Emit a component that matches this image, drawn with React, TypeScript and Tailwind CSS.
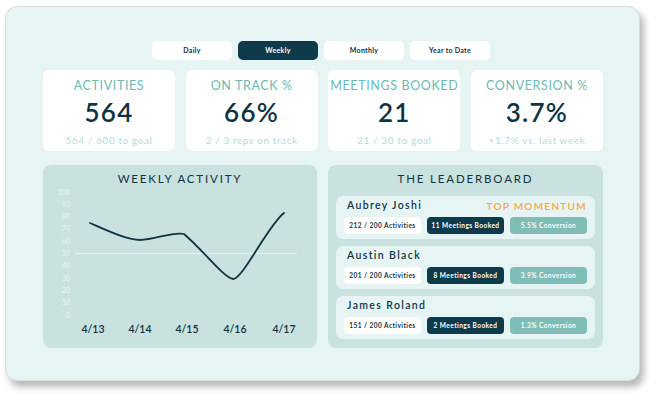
import React from "react";

const tabs = ["Daily", "Weekly", "Monthly", "Year to Date"];

const stats = [
  { title: "ACTIVITIES", value: "564", sub: "564 / 600 to goal" },
  { title: "ON TRACK %", value: "66%", sub: "2 / 3 reps on track" },
  { title: "MEETINGS BOOKED", value: "21", sub: "21 / 30 to goal" },
  { title: "CONVERSION %", value: "3.7%", sub: "+1.7% vs. last week" },
];

const reps = [
  { name: "Aubrey Joshi", activities: "212 / 200 Activities", meetings: "11 Meetings Booked", conversion: "5.5% Conversion", top: true },
  { name: "Austin Black", activities: "201 / 200 Activities", meetings: "8 Meetings Booked", conversion: "3.9% Conversion", top: false },
  { name: "James Roland", activities: "151 / 200 Activities", meetings: "2 Meetings Booked", conversion: "1.3% Conversion", top: false },
];

const FONT = { fontFamily: "Lato, 'Open Sans', sans-serif" };

function ActivityChart() {
  const ticks = [100, 90, 80, 70, 60, 50, 40, 30, 20, 10, 0];
  const y = (v: number) => 129 - v * 1.23;
  const days = [
    { label: "4/13", x: 50 },
    { label: "4/14", x: 97 },
    { label: "4/15", x: 144 },
    { label: "4/16", x: 192 },
    { label: "4/17", x: 241 },
  ];
  return (
    <svg width="274" height="160" viewBox="0 0 274 160" className="block">
      {ticks.map((t) => (
        <text key={t} x="27" y={y(t) + 2.5} textAnchor="end" fontSize="7" fill="#e8f5f4" style={FONT}>
          {t}
        </text>
      ))}
      <line x1="32" x2="254" y1={y(50)} y2={y(50)} stroke="#e6f3f2" strokeWidth="1" />
      <path
        d="M47 37 C 70 47, 85 54, 97 54 C 112 54, 130 45, 141 48 C 160 64, 180 91, 190 93 C 200 93, 225 39, 241 27"
        fill="none"
        stroke="#0f3444"
        strokeWidth="1.8"
        strokeLinecap="round"
        strokeLinejoin="round"
      />
      {days.map((d) => (
        <text key={d.label} x={d.x} y="147" textAnchor="middle" fontSize="10.5" fill="#0f3444" style={FONT} fontWeight="600">
          {d.label}
        </text>
      ))}
    </svg>
  );
}

export default function App() {
  return (
    <div className="h-[401px] w-[659px] overflow-hidden bg-white" style={FONT}>
      <div className="ml-[5px] mt-[6px] h-[375px] w-[635px] rounded-[12px] border border-[#d5dede] bg-[#e6f4f4] shadow-[4px_6px_7px_rgba(0,0,0,0.28)]">
        <div className="ml-[146px] mt-[34px] flex gap-[6px]">
          {tabs.map((t) => (
            <div
              key={t}
              className={
                t === "Weekly"
                  ? "flex h-[19px] w-[80px] items-center justify-center rounded-[5px] bg-[#0f3a4a] text-[7px] font-bold tracking-[0.04em] text-white"
                  : "flex h-[19px] w-[80px] items-center justify-center rounded-[5px] bg-white text-[7px] font-bold tracking-[0.04em] text-[#0f3444]"
              }
            >
              {t}
            </div>
          ))}
        </div>

        <div className="ml-[37px] mt-[10px] flex gap-[10.67px]">
          {stats.map((s) => (
            <div key={s.title} className="flex h-[81px] w-[132px] flex-col items-center rounded-[6px] bg-white">
              <div className="mt-[8px] whitespace-nowrap text-[12.5px] leading-[15px] tracking-[0.05em] text-[#6cb9b2]">{s.title}</div>
              <div className="mt-[4px] text-[26px] font-semibold leading-[30px] tracking-[0.05em] text-[#0f3444]">{s.value}</div>
              <div className="mt-[7px] whitespace-nowrap text-[10px] leading-[13px] tracking-[0.06em] text-[#b6dcd8]">{s.sub}</div>
            </div>
          ))}
        </div>

        <div className="ml-[37px] mt-[14px] flex gap-[11px]">
          <div className="h-[183px] w-[274px] rounded-[8px] bg-[#c9e1df]">
            <div className="mt-[7px] text-center text-[11.5px] leading-[14px] tracking-[0.16em] text-[#0f3444]">
              WEEKLY ACTIVITY
            </div>
            <ActivityChart />
          </div>

          <div className="flex h-[183px] w-[275px] flex-col rounded-[8px] bg-[#c9e1df] px-[8px]">
            <div className="mt-[7px] text-center text-[11.5px] leading-[14px] tracking-[0.16em] text-[#0f3444]">
              THE LEADERBOARD
            </div>
            <div className="mt-[10px] flex flex-col gap-[7px]">
              {reps.map((r) => (
                <div key={r.name} className="h-[43px] rounded-[7px] bg-[#e6f4f4] px-[8px] pt-[3px]">
                  <div className="flex h-[14px] items-center justify-between pl-[3px]">
                    <span className="text-[10.5px] font-semibold tracking-[0.13em] text-[#0f3444]">{r.name}</span>
                    {r.top && (
                      <span className="text-[10px] font-semibold tracking-[0.13em] text-[#f6a93b]">TOP MOMENTUM</span>
                    )}
                  </div>
                  <div className="mt-[4px] flex gap-[6px]">
                    <div className="flex h-[17px] w-[77px] items-center justify-center whitespace-nowrap rounded-[4px] bg-white text-[6.5px] font-bold tracking-[0.07em] text-[#0f3444]">
                      {r.activities}
                    </div>
                    <div className="flex h-[17px] w-[77px] items-center justify-center whitespace-nowrap rounded-[4px] bg-[#0f3a4a] text-[6.5px] font-bold tracking-[0.07em] text-white">
                      {r.meetings}
                    </div>
                    <div className="flex h-[17px] w-[77px] items-center justify-center whitespace-nowrap rounded-[4px] bg-[#7fbdb7] text-[6.5px] font-bold tracking-[0.07em] text-white">
                      {r.conversion}
                    </div>
                  </div>
                </div>
              ))}
            </div>
          </div>
        </div>
      </div>
    </div>
  );
}
